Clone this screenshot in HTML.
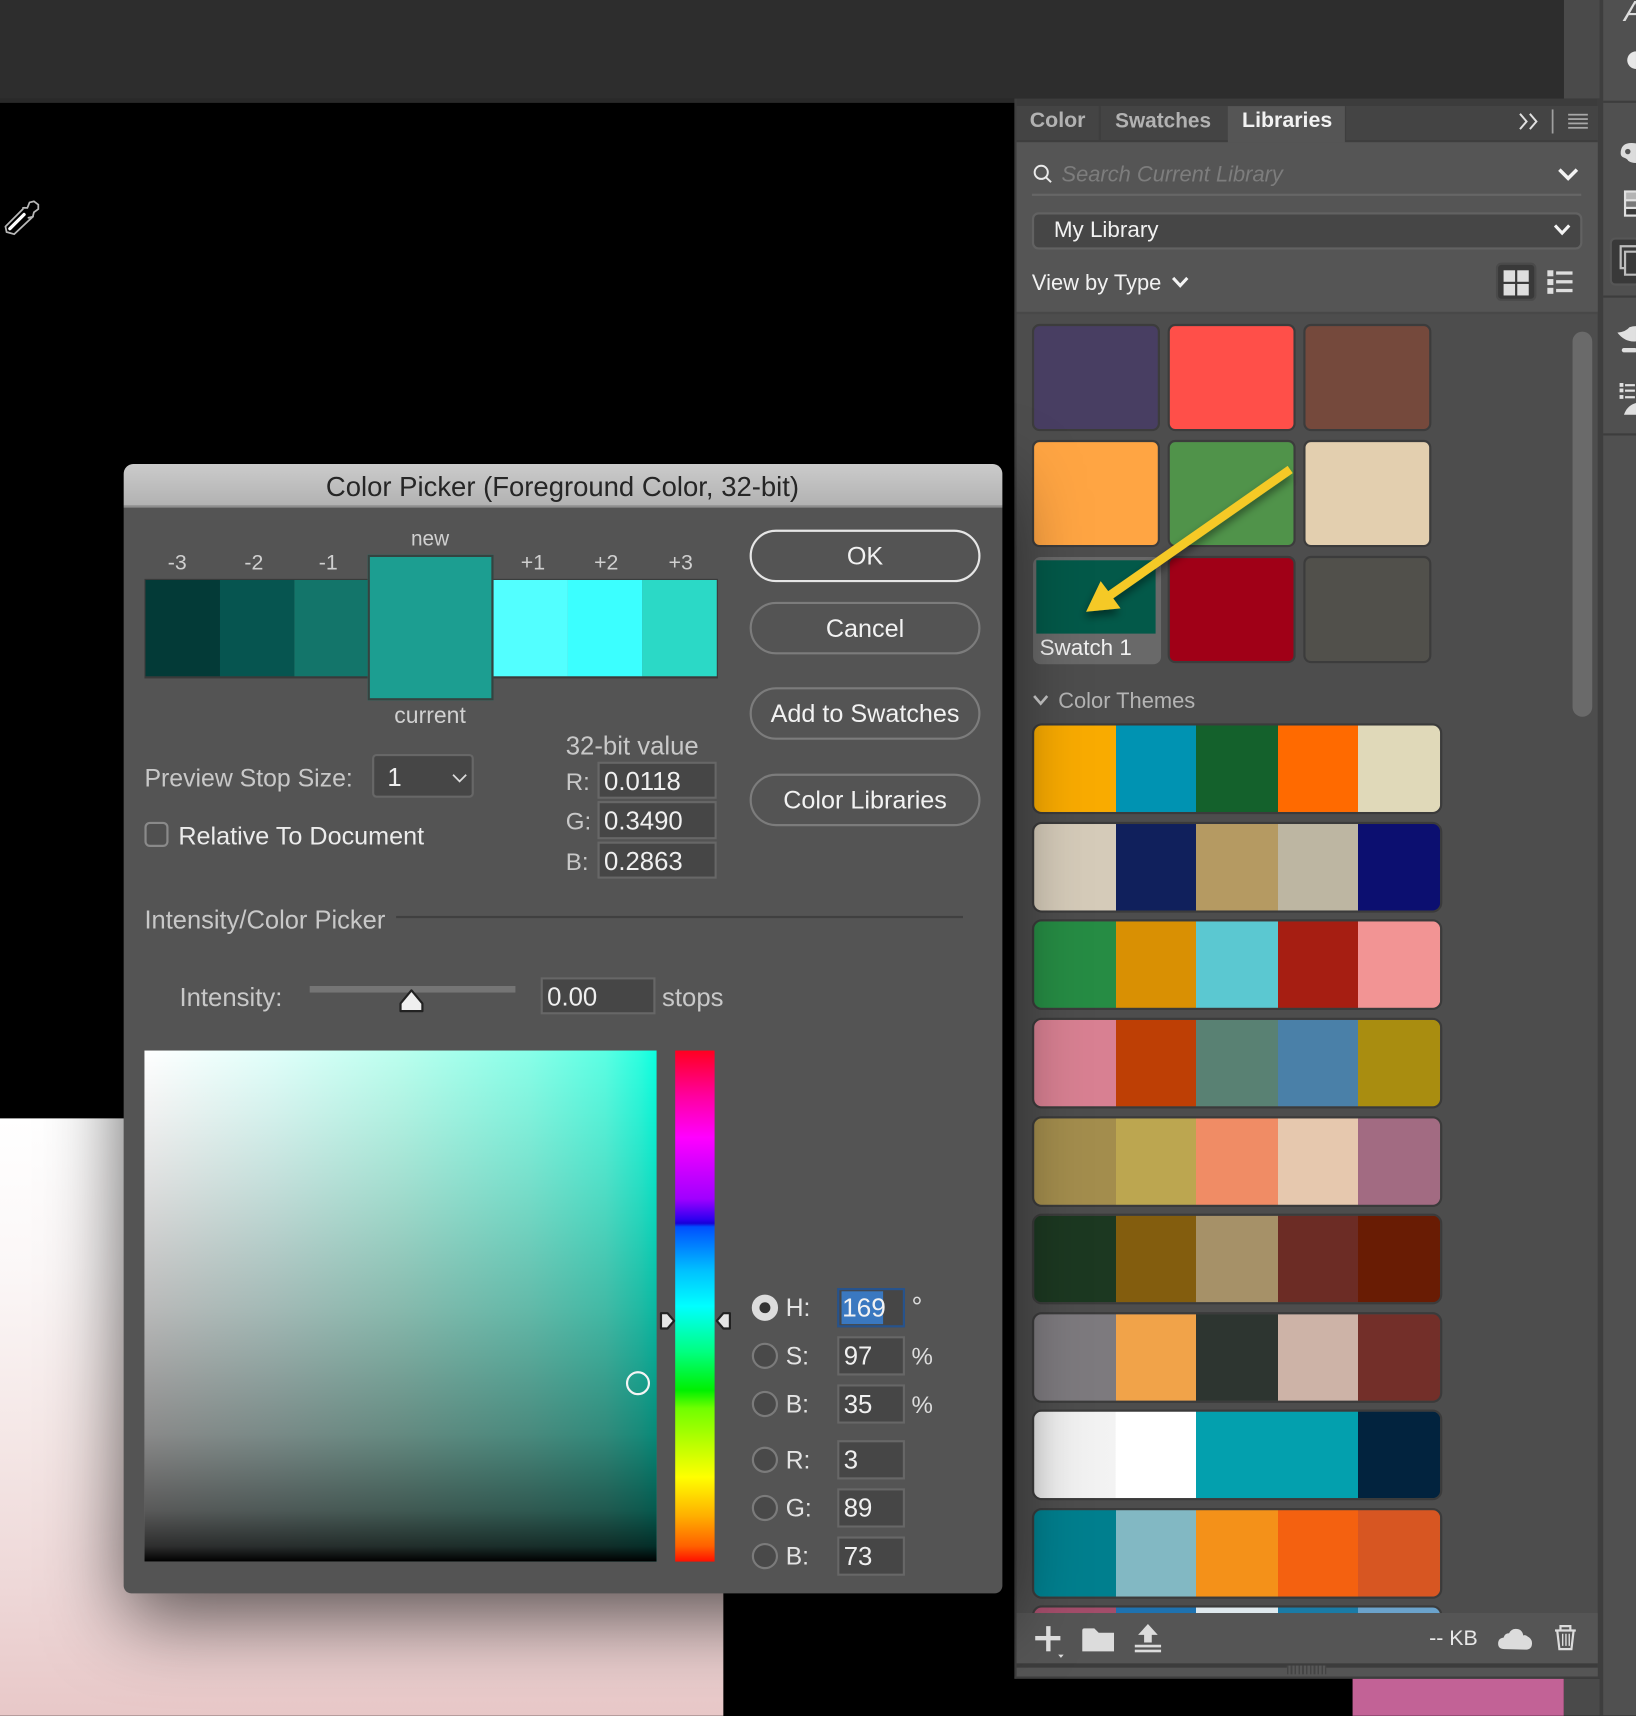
<!DOCTYPE html>
<html><head><meta charset="utf-8"><title>Color Picker</title>
<style>
html,body{margin:0;padding:0;width:1636px;height:1716px;overflow:hidden;background:#000}
*{box-sizing:border-box}
#w{position:absolute;left:0;top:0;width:1495px;height:1568px;transform:scale(1.09431);transform-origin:0 0;overflow:hidden;background:#000;font-family:"Liberation Sans",sans-serif}
.a{position:absolute}
.t{position:absolute;white-space:nowrap;line-height:1;transform:translateY(calc(-50% + 1px));font-size:22px;color:#d0d0d0}
.c{transform:translate(-50%,calc(-50% + 1px));text-align:center}
.sw{position:absolute;width:117px;height:98px;border:2px solid #3c3c3c;border-radius:7px}
.th{position:absolute;left:943px;width:375px;border:2px solid #3b3b3b;border-radius:9px}
.btn{position:absolute;left:685px;width:211px;height:48px;border:2px solid #7c7c7c;border-radius:24px;color:#f2f2f2;font-size:23px;line-height:44px;text-align:center}
.in{position:absolute;background:#464646;border:2px solid #676767;color:#f0f0f0;font-size:23.5px;line-height:32px;padding-left:4px}
.in2{left:765px;width:62px;height:36px;padding-left:4px;line-height:32px}
.r{position:absolute;left:687px;width:24px;height:24px;border:2px solid #7b7b7b;border-radius:50%;background:#494949}
.lb{left:718px;font-size:22.5px;color:#e4e4e4}
</style></head><body><div id="w">

<div class="a" style="left:0;top:0;width:1429px;height:90px;background:#2d2d2d"></div>
<div class="a" style="left:0;top:90px;width:1429px;height:4px;background:#292929"></div>
<div class="a" style="left:1429px;top:0;width:33px;height:90px;background:#4a4a4a"></div>
<div class="a" style="left:1429px;top:1534px;width:33px;height:34px;background:#4a4a4a"></div>
<div class="a" style="left:1462px;top:0;width:33px;height:1568px;background:#505050;border-left:3px solid #3e3e3e"></div>
<div class="a" style="left:1465px;top:92px;width:30px;height:2px;background:#3d3d3d"></div>
<div class="a" style="left:1465px;top:270px;width:30px;height:2px;background:#3d3d3d"></div>
<div class="a" style="left:1465px;top:396px;width:30px;height:2px;background:#3d3d3d"></div>
<div class="t" style="left:1484px;top:9px;font-size:26px;font-style:italic;color:#ddd">A</div>

<div class="a" style="left:0;top:1022px;width:661px;height:546px;background:linear-gradient(180deg,#fff 0,#fbf7f7 25%,#f4e6e5 55%,#eed8d8 78%,#e8c8c8 100%)"></div>
<div class="a" style="left:1236px;top:1534px;width:193px;height:34px;background:#c26296"></div>

<!-- Panel -->
<div class="a" style="left:927px;top:90px;width:535px;height:1444px;background:#4d4d4d;border-left:2px solid #3e3e3e;border-right:2px solid #3e3e3e;border-bottom:2px solid #3e3e3e"></div>
<div class="a" style="left:929px;top:90px;width:531px;height:7px;background:#3c3c3c"></div>
<div class="a" style="left:929px;top:97px;width:531px;height:31px;background:#444"></div>
<div class="a" style="left:1004px;top:97px;width:2px;height:31px;background:#3e3e3e"></div>
<div class="a" style="left:1122px;top:97px;width:108px;height:33px;background:#555;border-right:1px solid #3e3e3e"></div>
<div class="a" style="left:929px;top:128px;width:193px;height:2px;background:#3e3e3e"></div>
<div class="a" style="left:1230px;top:128px;width:230px;height:2px;background:#3e3e3e"></div>
<div class="a" style="left:929px;top:130px;width:531px;height:155px;background:#555"></div>
<div class="a" style="left:929px;top:285px;width:531px;height:2px;background:#484848"></div>
<div class="t" style="left:941px;top:110px;font-size:19.500px;font-weight:bold;color:#b2b2b2">Color</div>
<div class="t" style="left:1019px;top:110px;font-size:19px;font-weight:bold;color:#b2b2b2">Swatches</div>
<div class="t" style="left:1135px;top:110px;font-size:19.500px;font-weight:bold;color:#f2f2f2">Libraries</div>
<div class="t" style="left:970px;top:159px;font-size:20px;font-style:italic;color:#7d7d7d">Search Current Library</div>
<div class="a" style="left:943px;top:177px;width:502px;height:2px;background:#666"></div>
<div class="a" style="left:943px;top:194px;width:503px;height:34px;background:#464646;border:2px solid #626262;border-radius:6px"></div>
<div class="t" style="left:963px;top:210px;font-size:20.500px;color:#f2f2f2">My Library</div>
<div class="t" style="left:943px;top:257.500px;font-size:20px;color:#f2f2f2">View by Type</div>
<div class="a" style="left:1367px;top:240px;width:37px;height:35px;background:#393939;border:2px solid #4a4a4a;border-radius:5px"></div>
<div class="a" style="left:1437px;top:303px;width:18px;height:352px;background:#6a6a6a;border-radius:9px"></div>

<!-- swatches -->
<div class="sw" style="left:943px;top:296px;background:#483e62"></div>
<div class="sw" style="left:1067px;top:296px;background:#ff4f49"></div>
<div class="sw" style="left:1191px;top:296px;background:#75493c"></div>
<div class="sw" style="left:943px;top:402px;background:#ffa543"></div>
<div class="sw" style="left:1067px;top:402px;background:#50934a"></div>
<div class="sw" style="left:1191px;top:402px;background:#e3cfaf"></div>
<div class="a" style="left:943.500px;top:508.500px;width:117px;height:98px;background:#696969;border-radius:7px"></div>
<div class="a" style="left:947px;top:512px;width:109px;height:67px;background:#035949"></div>
<div class="t" style="left:950px;top:592px;font-size:20.500px;color:#f0f0f0">Swatch 1</div>
<div class="sw" style="left:1067px;top:508px;background:#a00017"></div>
<div class="sw" style="left:1191px;top:508px;background:#51504b"></div>
<div class="t" style="left:967px;top:639.500px;font-size:20px;color:#b4b4b4">Color Themes</div>

<!-- themes -->
<div class="th" style="top:661px;height:83px;background:linear-gradient(90deg,#f9ab00 75px,#0093b2 75px,#0093b2 148px,#14612c 148px,#14612c 223px,#ff6a00 223px,#ff6a00 296px,#e0d9b9 296px)"></div>
<div class="th" style="top:751px;height:83px;background:linear-gradient(90deg,#d5cbb9 75px,#10205c 75px,#10205c 148px,#b59a62 148px,#b59a62 223px,#bdb6a2 223px,#bdb6a2 296px,#0c0f70 296px)"></div>
<div class="th" style="top:840px;height:83px;background:linear-gradient(90deg,#268c44 75px,#d99003 75px,#d99003 148px,#5bc8d1 148px,#5bc8d1 223px,#a61e12 223px,#a61e12 296px,#f29494 296px)"></div>
<div class="th" style="top:930px;height:83px;background:linear-gradient(90deg,#d88092 75px,#be3f05 75px,#be3f05 148px,#598173 148px,#598173 223px,#4a80a8 223px,#4a80a8 296px,#a98d10 296px)"></div>
<div class="th" style="top:1020px;height:83px;background:linear-gradient(90deg,#a38d4d 75px,#bca650 75px,#bca650 148px,#f08c65 148px,#f08c65 223px,#e6c8ae 223px,#e6c8ae 296px,#a26b82 296px)"></div>
<div class="th" style="top:1109px;height:83px;background:linear-gradient(90deg,#1c3821 75px,#835d0e 75px,#835d0e 148px,#a69168 148px,#a69168 223px,#6c2c25 223px,#6c2c25 296px,#691c04 296px)"></div>
<div class="th" style="top:1199px;height:83px;background:linear-gradient(90deg,#7d7a7e 75px,#f1a349 75px,#f1a349 148px,#2d3530 148px,#2d3530 223px,#cdb3a7 223px,#cdb3a7 296px,#732f29 296px)"></div>
<div class="th" style="top:1288px;height:83px;background:linear-gradient(90deg,#e6e6e6 0,#f0f0f0 20px,#f3f3f3 74px,#fff 75px,#fff 148px,#03a0ae 148px,#03a0ae 296px,#02233e 296px)"></div>
<div class="th" style="top:1378px;height:83px;background:linear-gradient(90deg,#007f8e 75px,#82b8c3 75px,#82b8c3 148px,#f49119 148px,#f49119 223px,#f46110 223px,#f46110 296px,#d75622 296px)"></div>
<div class="th" style="top:1467px;height:20px;background:linear-gradient(90deg,#a34d6a 75px,#1e72b0 75px,#1e72b0 148px,#dfe9ee 148px,#dfe9ee 223px,#1a7ba6 223px,#1a7ba6 296px,#6ba3cc 296px)"></div>

<!-- footer -->
<div class="a" style="left:929px;top:1474px;width:531px;height:46px;background:#555"></div>
<div class="a" style="left:929px;top:1520px;width:531px;height:4px;background:#3c3c3c"></div>
<div class="a" style="left:929px;top:1524px;width:531px;height:8px;background:#555"></div>
<div class="a" style="left:1176px;top:1522px;width:36px;height:8px;background:repeating-linear-gradient(90deg,#444 0,#444 1.5px,#575757 1.5px,#575757 3.5px)"></div>
<div class="t" style="left:1306px;top:1497px;font-size:19.500px;color:#e8e8e8">-- KB</div>

<!-- Dialog -->
<div class="a" style="left:113px;top:424px;width:803px;height:1032px;background:#545454;border-radius:9px 9px 7px 7px;box-shadow:0 22px 70px rgba(0,0,0,.62)"></div>
<div class="a" style="left:113px;top:424px;width:803px;height:40px;border-radius:9px 9px 0 0;background:linear-gradient(180deg,#cbcbcb,#b2b2b2);border-bottom:2px solid #8e8e8e"></div>
<div class="t c" style="left:514px;top:444.500px;font-size:25.100px;color:#262626">Color Picker (Foreground Color, 32-bit)</div>

<div class="a" style="left:132px;top:529px;width:524px;height:91px;background:#3a3a3a"></div>
<div class="a" style="left:133px;top:530px;width:68px;height:88px;background:#033a37"></div>
<div class="a" style="left:201px;top:530px;width:68px;height:88px;background:#065550"></div>
<div class="a" style="left:269px;top:530px;width:68px;height:88px;background:#13756a"></div>
<div class="a" style="left:451px;top:530px;width:68px;height:88px;background:#52ffff"></div>
<div class="a" style="left:519px;top:530px;width:68px;height:88px;background:#3bffff"></div>
<div class="a" style="left:587px;top:530px;width:68px;height:88px;background:#2bd9c6"></div>
<div class="a" style="left:336px;top:507px;width:115px;height:133px;background:#1c9e91;border:2px solid #354340"></div>
<div class="t c" style="left:393px;top:492px;font-size:19px">new</div>
<div class="t c" style="left:393px;top:652.500px;font-size:21px">current</div>
<div class="t c" style="left:162px;top:514px;font-size:19.500px">-3</div>
<div class="t c" style="left:232px;top:514px;font-size:19.500px">-2</div>
<div class="t c" style="left:300px;top:514px;font-size:19.500px">-1</div>
<div class="t c" style="left:487px;top:514px;font-size:19.500px">+1</div>
<div class="t c" style="left:554px;top:514px;font-size:19.500px">+2</div>
<div class="t c" style="left:622px;top:514px;font-size:19.500px">+3</div>

<div class="btn" style="top:484px;border-color:#e6e6e6">OK</div>
<div class="btn" style="top:550px">Cancel</div>
<div class="btn" style="top:628px">Add to Swatches</div>
<div class="btn" style="top:707px">Color Libraries</div>

<div class="t" style="left:517px;top:681px;font-size:23.500px;color:#c8c8c8">32-bit value</div>
<div class="t" style="left:517px;top:714px;font-size:22px;color:#c8c8c8">R:</div>
<div class="t" style="left:517px;top:750px;font-size:22px;color:#c8c8c8">G:</div>
<div class="t" style="left:517px;top:787px;font-size:22px;color:#c8c8c8">B:</div>
<div class="in" style="left:546px;top:696px;width:109px;height:34px">0.0118</div>
<div class="in" style="left:546px;top:732px;width:109px;height:35px">0.3490</div>
<div class="in" style="left:546px;top:769px;width:109px;height:34px">0.2863</div>

<div class="t" style="left:132px;top:709.500px;font-size:22.700px;color:#c8c8c8">Preview Stop Size:</div>
<div class="a" style="left:340px;top:689px;width:93px;height:40px;background:#464646;border:2px solid #676767;border-radius:4px"></div>
<div class="t" style="left:354px;top:710px;font-size:23.500px;color:#eee">1</div>
<div class="a" style="left:132px;top:751px;width:22px;height:23px;border:2px solid #8a8a8a;border-radius:5px;background:#505050"></div>
<div class="t" style="left:163px;top:763px;font-size:23px;color:#ececec">Relative To Document</div>

<div class="t" style="left:132px;top:840px;font-size:23.300px;color:#c8c8c8">Intensity/Color Picker</div>
<div class="a" style="left:362px;top:836.500px;width:518px;height:2px;background:#404040"></div>
<div class="t" style="left:164px;top:911px;font-size:23.500px;color:#c8c8c8">Intensity:</div>
<div class="a" style="left:283px;top:901px;width:188px;height:6px;background:#757575"></div>
<div class="in" style="left:494px;top:893px;width:105px;height:34px">0.00</div>
<div class="t" style="left:605px;top:911px;font-size:23.500px;color:#c8c8c8">stops</div>

<div class="a" style="left:132px;top:960px;width:468px;height:467px;background:linear-gradient(180deg,rgba(0,0,0,0) 0,rgba(0,0,0,.055) 12%,rgba(0,0,0,.12) 25%,rgba(0,0,0,.27) 50%,rgba(0,0,0,.46) 75%,rgba(0,0,0,.65) 90%,rgba(0,0,0,.82) 97%,#000 100%),linear-gradient(90deg,#fff 0,#e0fffa 25%,#baffee 50%,#88ffe8 75%,#5affe3 90%,#2bffe0 97%,#0cffe0 100%)"></div>
<div class="a" style="left:617px;top:960px;width:36px;height:467px;background:linear-gradient(180deg,#ff0020 0,#ff00a0 9%,#ff00ff 17%,#a000ff 29%,#3000f0 33%,#1800d8 33.8%,#0050ff 34.5%,#00c0ff 43%,#00ffff 50%,#00ff80 59%,#00f000 66.5%,#70ff00 70%,#d0ff00 79%,#ffff00 83.5%,#ffb000 91%,#ff6000 97%,#ff1000 100%)"></div>
<div class="a" style="left:572px;top:1253px;width:22px;height:22px;border:2px solid #f4f4f4;border-radius:50%"></div>

<div class="r" style="top:1183px;background:#dcdcdc;border-color:#dcdcdc"></div>
<div class="a" style="left:694px;top:1190px;width:10px;height:10px;border-radius:50%;background:#333"></div>
<div class="r" style="top:1227px"></div>
<div class="r" style="top:1271px"></div>
<div class="r" style="top:1322px"></div>
<div class="r" style="top:1366px"></div>
<div class="r" style="top:1410px"></div>
<div class="t lb" style="top:1195px">H:</div>
<div class="t lb" style="top:1239px">S:</div>
<div class="t lb" style="top:1283px">B:</div>
<div class="t lb" style="top:1334px">R:</div>
<div class="t lb" style="top:1378px">G:</div>
<div class="t lb" style="top:1422px">B:</div>
<div class="in in2" style="top:1176.500px;border-color:#27538c;border-width:2px"></div>
<div class="a" style="left:769px;top:1180px;width:38px;height:30px;background:#3a78c0"></div>
<div class="t" style="left:769.500px;top:1194.500px;font-size:24px;color:#f2f2f2">169</div>
<div class="in in2" style="top:1220.500px">97</div>
<div class="in in2" style="top:1264.500px">35</div>
<div class="in in2" style="top:1315.500px">3</div>
<div class="in in2" style="top:1359.500px">89</div>
<div class="in in2" style="top:1403.500px">73</div>
<div class="t" style="left:833px;top:1194px;font-size:25px;color:#ddd">°</div>
<div class="t" style="left:833px;top:1238.500px;font-size:22px;color:#ddd">%</div>
<div class="t" style="left:833px;top:1282.500px;font-size:22px;color:#ddd">%</div>

<!-- icons overlay -->
<svg class="a" style="left:0;top:0" width="1495" height="1568" viewBox="0 0 1495 1568">
<!-- eyedropper -->
<g fill="none" stroke-linecap="round">
<path d="M6 212 L5 207 L22 190 L30 198 L13 214 Z" fill="#000" stroke="#b8b8b8" stroke-width="1.6"/>
<path d="M9 209 L22 196" stroke="#fff" stroke-width="3"/>
<path d="M21 190 L25 190 L27 185 L31 184 L35 187 L35 191 L31 194 L30 198 L26 199" fill="#000" stroke="#b8b8b8" stroke-width="1.6"/>
</g>
<!-- tab icons -->
<g fill="none" stroke="#e0e0e0" stroke-width="1.8">
<path d="M1389 104 L1395 111 L1389 118 M1398 104 L1404 111 L1398 118"/>
</g>
<rect x="1418" y="100" width="1.6" height="22" fill="#a0a0a0"/>
<g fill="#a8a8a8"><rect x="1433" y="104" width="18" height="1.6"/><rect x="1433" y="108" width="18" height="1.6"/><rect x="1433" y="112" width="18" height="1.6"/><rect x="1433" y="116" width="18" height="1.6"/></g>
<!-- search -->
<g fill="none" stroke="#eaeaea" stroke-width="1.800"><circle cx="951.500" cy="157.500" r="6"/><path d="M955.800 162 L960.500 166.500"/></g>
<g fill="none" stroke="#f4f4f4" stroke-width="3.2"><path d="M1425 155 L1433 163 L1441 155"/></g>
<g fill="none" stroke="#f4f4f4" stroke-width="2.8"><path d="M1421 206 L1427.500 213 L1434 206"/><path d="M1072 254 L1078.500 261 L1085 254"/></g>
<!-- grid / list -->
<g fill="#dedede"><rect x="1374" y="247" width="10.500" height="10.500"/><rect x="1386.500" y="247" width="10.500" height="10.500"/><rect x="1374" y="259.500" width="10.500" height="10.500"/><rect x="1386.500" y="259.500" width="10.500" height="10.500"/>
<rect x="1414" y="247" width="5.500" height="5.500"/><rect x="1414" y="255" width="5.500" height="5.500"/><rect x="1414" y="263" width="5.500" height="5.500"/><rect x="1422" y="248" width="15" height="3"/><rect x="1422" y="256" width="15" height="3"/><rect x="1422" y="264" width="15" height="3"/></g>
<!-- themes chevron -->
<path d="M945 636 L951 643 L957 636" fill="none" stroke="#b4b4b4" stroke-width="2.4"/>
<!-- arrow -->
<g filter="url(#sh)"><path d="M1176.700 425.700 L1181.300 432.300 L1017.300 546.800 L1024 556 L992.500 559 L1005.800 531 L1012.700 540.200 Z" fill="#f5c926"/></g>
<defs><filter id="sh" x="-20%" y="-20%" width="150%" height="150%"><feDropShadow dx="-1" dy="5" stdDeviation="4" flood-color="#000" flood-opacity=".45"/></filter></defs>
<!-- footer icons -->
<g fill="#dcdcdc">
<rect x="956" y="1486" width="4" height="23"/><rect x="946" y="1495" width="23" height="4"/>
<path d="M967 1512 h5 l-2.500 3 z"/>
<path d="M989 1490 q0-2 2-2 h9 l4 4 h14 v17 h-29 z"/>
<path d="M1049 1484 l9 10 h-5.500 v7 h-7 v-7 h-5.500 z"/>
<rect x="1037" y="1503" width="24" height="2.400"/><rect x="1037" y="1507.500" width="24" height="2.400"/>
<path d="M1375 1507 q-6 0-6-5 q0-5 5-5.500 q1-4 5-4 q2-4 6-4 q6 0 7 6 q2-1 4 1 q4 2 4 6 q0 6-6 6 z"/>
</g>
<g fill="none" stroke="#dcdcdc" stroke-width="2"><path d="M1421 1490 h19 M1426 1489 v-3 h9 v3"/><path d="M1423 1490 l2 17 h11 l2-17"/><path d="M1428 1493 v11 M1431 1493 v11 M1434 1493 v11" stroke-width="1.300"/></g>
<!-- small select chevron -->
<path d="M414 708 L420 714 L426 708" fill="none" stroke="#dcdcdc" stroke-width="1.600"/>
<!-- slider thumb -->
<path d="M376 905 L386 917 V924 H366 V917 Z" fill="#efefef" stroke="#222" stroke-width="2" stroke-linejoin="round"/>
<!-- hue markers -->
<path d="M604 1200 H610 L616 1207 L610 1214 H604 Z" fill="#e6e6e6" stroke="#222" stroke-width="2" stroke-linejoin="round"/>
<path d="M667 1200 H661 L655 1207 L661 1214 H667 Z" fill="#e6e6e6" stroke="#222" stroke-width="2" stroke-linejoin="round"/>
<!-- dock icons -->
<circle cx="1495" cy="55" r="8" fill="#e8e8e8"/>
<path d="M1495 131 q-14-2-14 9 q0 3 3 4 q3 1 4 3 q3 2 7 2 z" fill="#dcdcdc"/><circle cx="1487.500" cy="138.500" r="2.500" fill="#555"/>
<rect x="1484" y="174" width="12" height="24" fill="#e0e0e0"/><rect x="1486" y="176" width="10" height="6" fill="#b4b4b4"/><rect x="1486" y="184" width="10" height="5" fill="#777"/><rect x="1486" y="191" width="10" height="5" fill="#3a3a3a"/>
<rect x="1472" y="218" width="26" height="42" rx="4" fill="#393939" stroke="#565656" stroke-width="2"/>
<g fill="none" stroke="#bdbdbd" stroke-width="2"><path d="M1497 225 h-16 v20 h4"/><path d="M1497 230 h-12 v21 h12"/></g>
<path d="M1478 304 q8-1 11-5 q3-1 6-1 v14 q-10 1-17-8 z" fill="#e0e0e0"/><rect x="1482" y="318" width="14" height="4" rx="2" fill="#e0e0e0"/>
<g fill="#e0e0e0"><rect x="1480" y="350" width="3.500" height="3.500"/><rect x="1480" y="355" width="3.500" height="3.500"/><rect x="1480" y="361" width="3.500" height="3.500"/><rect x="1485" y="351" width="9" height="2"/><rect x="1485" y="356" width="9" height="2"/><rect x="1485" y="362" width="9" height="2"/><path d="M1487 379 h-3 q3-9 12-11 v11 z"/></g>
</svg>
</div></body></html>
